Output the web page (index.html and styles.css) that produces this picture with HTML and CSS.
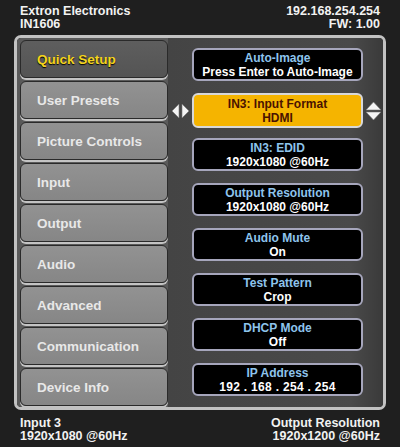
FILE: index.html
```html
<!DOCTYPE html>
<html lang="en">

<head>
    <meta charset="UTF-8">
    <meta name="viewport" content="width=device-width, initial-scale=1">
    <title>IN1606 Quick Setup</title>
    <link rel="stylesheet" href="styles.css">
</head>

<body>

    <!-- Top status line -->
    <div class="status-bar">
        <div class="status-left">
            <div>Extron Electronics</div>
            <div>IN1606</div>
        </div>
        <div class="status-right">
            <div>192.168.254.254</div>
            <div>FW: 1.00</div>
        </div>
    </div>

    <div class="frame">
        <!-- Left side: menu tabs -->
        <div class="tabs">
            <div class="tab active">Quick Setup</div>
            <div class="tab">User Presets</div>
            <div class="tab">Picture Controls</div>
            <div class="tab">Input</div>
            <div class="tab">Output</div>
            <div class="tab">Audio</div>
            <div class="tab">Advanced</div>
            <div class="tab">Communication</div>
            <div class="tab">Device Info</div>
        </div>

        <!-- Right side: settings -->
        <div class="settings">
            <div class="setting-row">
                <span></span>
                <div class="setting">
                    <div class="setting-label">Auto-Image</div>
                    <div class="setting-value">Press Enter to Auto-Image</div>
                </div>
                <span></span>
            </div>
            <div class="setting-row">
                <svg class="arrow-lr" width="17" height="16" viewBox="0 0 17 16">
                    <polygon points="7,1 0,8 7,15" fill="#f4f4f4" stroke="#777" stroke-width="0.6" />
                    <polygon points="10,1 17,8 10,15" fill="#f4f4f4" stroke="#777" stroke-width="0.6" />
                </svg>
                <div class="setting selected">
                    <div class="setting-label">IN3: Input Format</div>
                    <div class="setting-value">HDMI</div>
                </div>
                <svg class="arrow-ud" width="17" height="20" viewBox="0 0 17 20">
                    <polygon points="1,9 8.5,1 16,9" fill="#f4f4f4" stroke="#777" stroke-width="0.6" />
                    <polygon points="1,11 8.5,19 16,11" fill="#f4f4f4" stroke="#777" stroke-width="0.6" />
                </svg>
            </div>
            <div class="setting-row">
                <span></span>
                <div class="setting">
                    <div class="setting-label">IN3: EDID</div>
                    <div class="setting-value">1920x1080 @60Hz</div>
                </div>
                <span></span>
            </div>
            <div class="setting-row">
                <span></span>
                <div class="setting">
                    <div class="setting-label">Output Resolution</div>
                    <div class="setting-value">1920x1080 @60Hz</div>
                </div>
                <span></span>
            </div>
            <div class="setting-row">
                <span></span>
                <div class="setting">
                    <div class="setting-label">Audio Mute</div>
                    <div class="setting-value">On</div>
                </div>
                <span></span>
            </div>
            <div class="setting-row">
                <span></span>
                <div class="setting">
                    <div class="setting-label">Test Pattern</div>
                    <div class="setting-value">Crop</div>
                </div>
                <span></span>
            </div>
            <div class="setting-row">
                <span></span>
                <div class="setting">
                    <div class="setting-label">DHCP Mode</div>
                    <div class="setting-value">Off</div>
                </div>
                <span></span>
            </div>
            <div class="setting-row">
                <span></span>
                <div class="setting">
                    <div class="setting-label">IP Address</div>
                    <div class="setting-value ip">192 . 168 . 254 . 254</div>
                </div>
                <span></span>
            </div>
        </div>
    </div>

    <!-- Bottom status line -->
    <div class="status-bar footer">
        <div class="status-left">
            <div>Input 3</div>
            <div>1920x1080 @60Hz</div>
        </div>
        <div class="status-right">
            <div>Output Resolution</div>
            <div>1920x1200 @60Hz</div>
        </div>
    </div>

</body>

</html>
```

FILE: styles.css
```css
/* Front panel menu styles */
body {
    margin: 0;
    padding: 0;
    width: 400px;
    height: 447px;
    background-color: #1f1f1f;
    font-family: 'Liberation Sans', Arial, sans-serif;
    font-weight: bold;
    color: #f2f2f2;
    overflow: hidden;
}

.status-bar {
    display: flex;
    justify-content: space-between;
    padding: 5px 20px 0 20px;
    height: 30px;
    font-size: 12.5px;
    line-height: 13px;
}

.status-right {
    text-align: right;
}

.footer {
    padding-top: 7px;
}

.frame {
    display: flex;
    margin: 0 14px;
    height: 369px;
    border: 3px solid #c2c2c2;
    border-radius: 7px;
    background-color: #4c4c4c;
    box-shadow: inset 0 0 0 1px #262626;
    overflow: hidden;
}

/* Left side tabs */
.tabs {
    width: 148px;
    display: flex;
    flex-direction: column;
    gap: 3px;
    padding: 2px 0 0 3px;
    background-color: #5a5a5a;
    border-radius: 4px 0 0 4px;
}

.tab {
    height: 36px;
    display: flex;
    align-items: center;
    padding-left: 16px;
    font-size: 13.5px;
    color: #e8e8e8;
    background: linear-gradient(#929292, #868686);
    border: 1px solid #2a2a2a;
    border-radius: 6px;
    box-shadow: 0 2px 0 #c4c4c4;
}

.tab.active {
    color: #f4d41c;
    background: linear-gradient(#5e5e5e, #545454);
    text-shadow: 0 1px 1px #000;
}

/* Right side settings */
.settings {
    flex: 1;
    display: flex;
    flex-direction: column;
    gap: 12px;
    padding-top: 10px;
    background: linear-gradient(90deg, #444 0%, #4a4a4a 85%, #3a3a3a 100%);
}

.setting-row {
    height: 33px;
    display: grid;
    grid-template-columns: 24px 171px 1fr;
    align-items: center;
}

.arrow-lr {
    margin-left: 4px;
}

.arrow-ud {
    margin-left: 2px;
}

.setting {
    box-sizing: border-box;
    height: 33px;
    padding-top: 2px;
    background-color: #000;
    border: 2px solid #a6a6bc;
    border-radius: 6px;
    text-align: center;
    font-size: 12px;
    line-height: 13.5px;
}

.setting-label {
    color: #8ec4ec;
}

.setting-value {
    color: #ffffff;
}

.setting-value.ip {
    letter-spacing: 0.3px;
}

.setting.selected {
    height: 35px;
    padding-top: 3px;
    background-color: #f5b400;
    border-color: #d8d8d8;
}

.setting.selected .setting-label,
.setting.selected .setting-value {
    color: #4a1200;
}
```
